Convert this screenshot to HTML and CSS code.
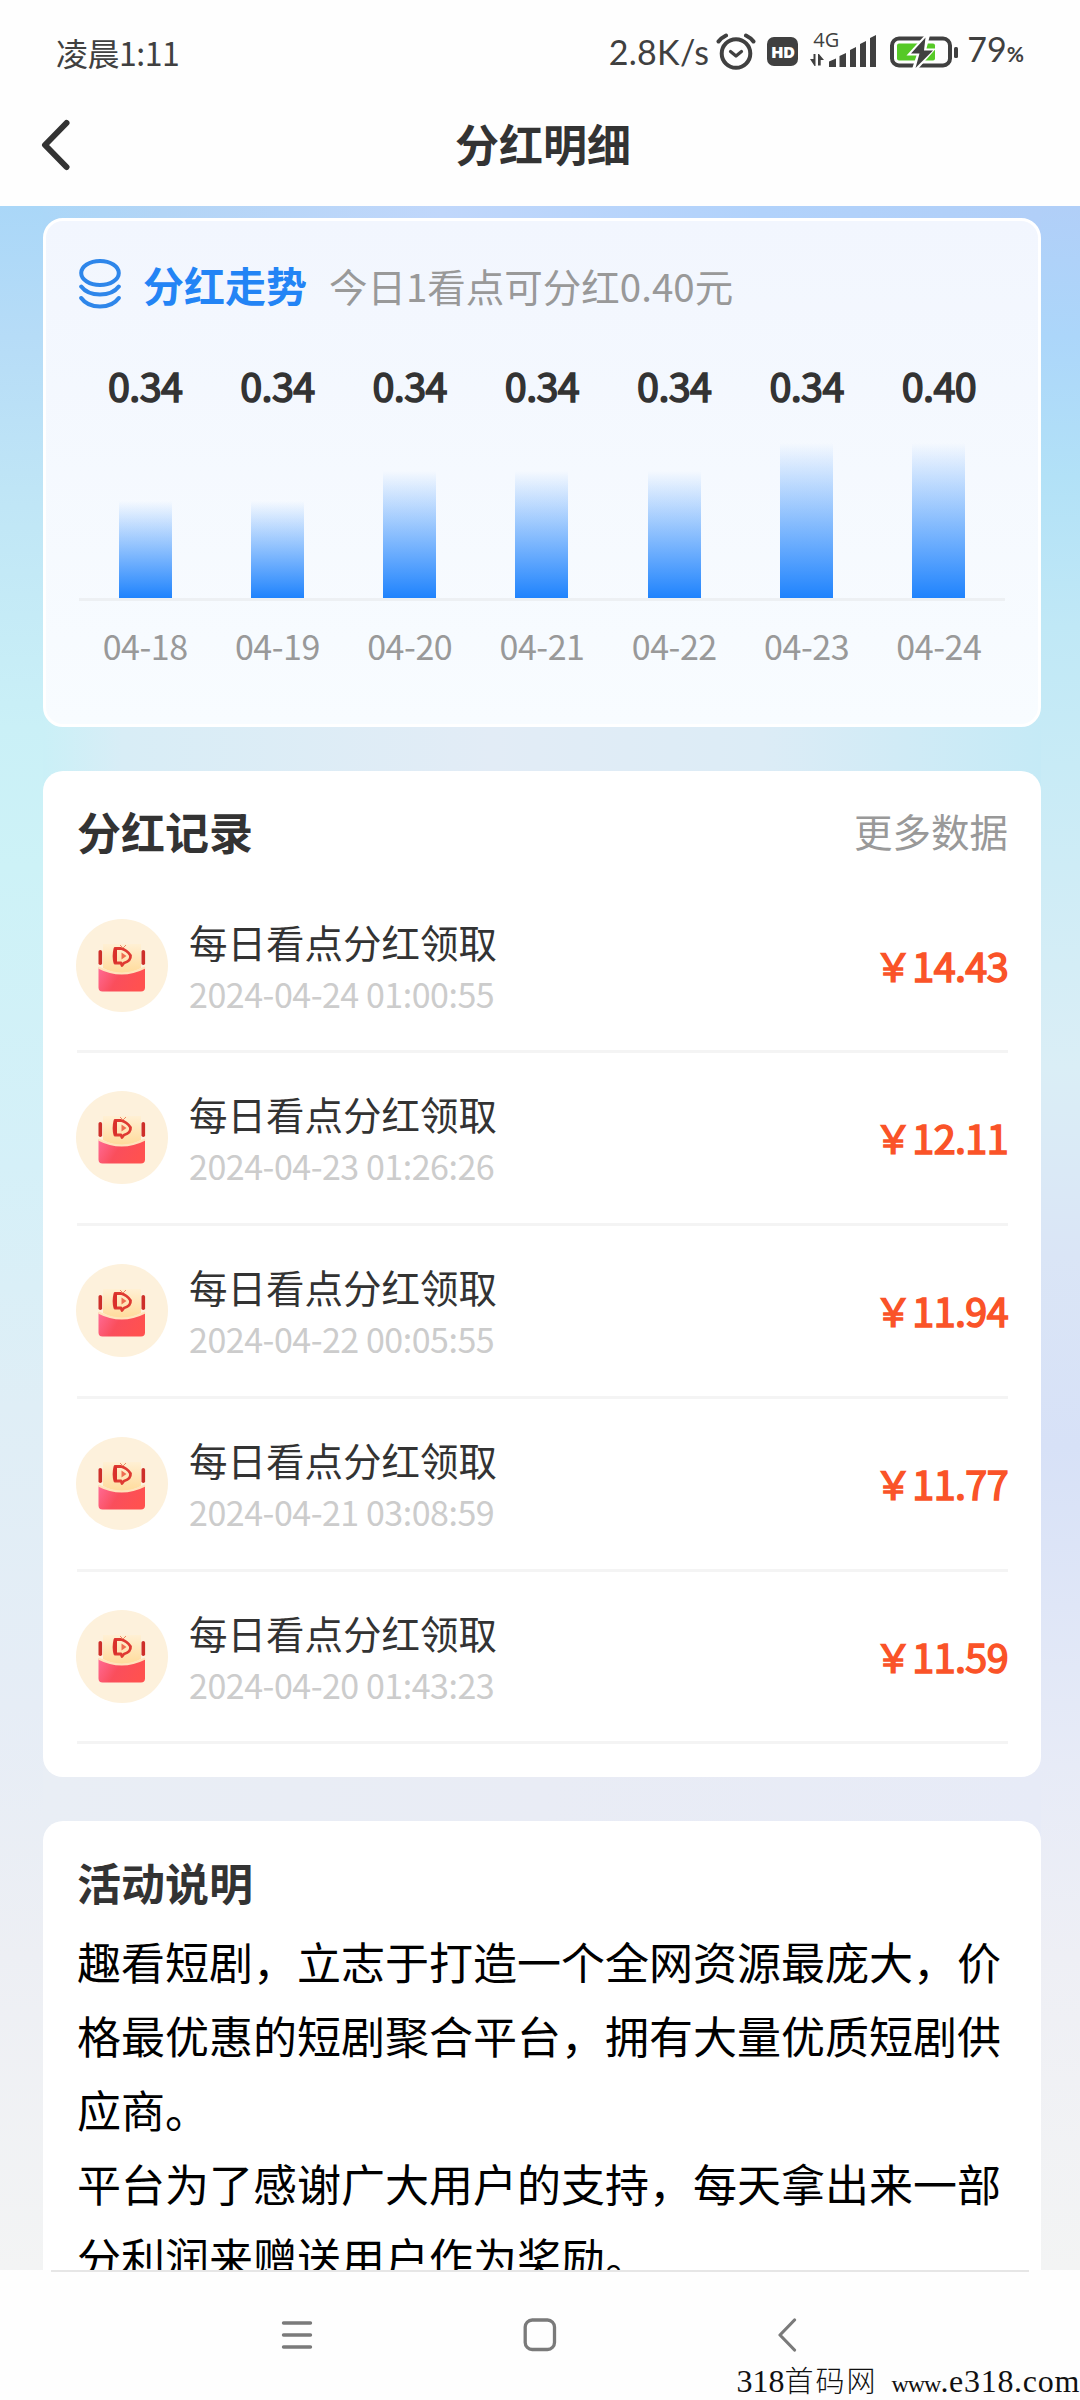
FILE: index.html
```
<!DOCTYPE html>
<html lang="zh-CN">
<head>
<meta charset="utf-8">
<title>分红明细</title>
<link rel="stylesheet" href="styles.css">
</head>
<body>
<svg class="defs" width="0" height="0" aria-hidden="true">
  <defs>
    <linearGradient id="pocket" x1="0" y1="0" x2="1" y2="0.3"><stop offset="0" stop-color="#ff6b96"/><stop offset="0.5" stop-color="#fa4e5c"/><stop offset="1" stop-color="#ff5150"/></linearGradient>
    <linearGradient id="paper" x1="0" y1="0" x2="0" y2="1"><stop offset="0" stop-color="#fff0d4"/><stop offset="1" stop-color="#ffdb9b"/></linearGradient>
    <symbol id="envelope" viewBox="0 0 92 93">
      <ellipse cx="46" cy="46.5" rx="46" ry="46.5" fill="#fdf1dc"/>
      <rect x="22.500" y="31" width="3.600" height="15" rx="1.800" fill="#cd2f2a"/>
      <rect x="65.500" y="31" width="3.600" height="15" rx="1.800" fill="#cd2f2a"/>
      <path d="M27 25h38v24q-19 10-38 0z" fill="url(#paper)"/>
      <path d="M22.500 48.500q23 12 46.500 0v20q0 4-4 4H26.500q-4 0-4-4z" fill="url(#pocket)"/>
      <path d="M22.500 48.500q23 12 46.500 0" fill="none" stroke="#ffe3bb" stroke-width="2"/>
      <path d="M41 29.500h-2q-2 8 0 14.500h6l1 2.500 2-2.500q7-2 6.500-7.500-3.500-5.500-9.500-7z" fill="none" stroke="#df3a32" stroke-width="2.800" stroke-linejoin="round"/>
      <path d="M38 29.500h3v14.500h-3q-1.500-7 0-14.500z" fill="#d9302b"/>
      <path d="M45.500 33.500v7l5-3.500z" fill="#ef6c50"/>
      <path d="M44 26l3 3 3-3" fill="none" stroke="#ef8a68" stroke-width="1"/>
    </symbol>
  </defs>
</svg>

<header class="status-bar">
  <span class="clock">凌晨1:11</span>
  <span class="speed">2.8K/s</span>
  <svg class="alarm" width="40" height="40" viewBox="0 0 40 40" fill="none" stroke="#404040" stroke-linecap="round">
    <circle cx="20" cy="21.500" r="14.300" stroke-width="4"/><path d="M14.500 19.500l5.500 4.500 5.500-4.500" stroke-width="3.200" stroke-linejoin="round"/><path d="M2.500 9.500Q5 6 10 3.500M37.500 9.500Q35 6 30 3.500" stroke-width="4"/>
  </svg>
  <span class="hd">HD</span>
  <span class="network">
    <span class="gen">4G</span>
    <svg width="66" height="34" viewBox="0 0 66 34" fill="#404040">
      <path d="M0 24h3.500v-5h2v12H4.500zM8 19h1l5 6h-3.300v5.500H8z"/>
      <path d="M19 26.500l7-3v8.500h-7zM29.500 21l6.500-3v14h-6.500zM40 15l6-3v20h-6zM50 9l6-3v26h-6zM60 3l6-3v32h-6z"/>
    </svg>
  </span>
  <svg class="battery" width="68" height="34" viewBox="0 0 68 34">
    <rect x="2" y="3.500" width="58" height="27" rx="7" fill="none" stroke="#404040" stroke-width="4"/>
    <rect x="7" y="8.500" width="38" height="17" rx="2" fill="#56c926"/>
    <rect x="64" y="12" width="4" height="11" rx="1.500" fill="#404040"/>
    <path d="M35 0L16.500 20.500h10L22 34h6L46 13.500H36.500L40 0z" fill="#fff"/>
    <path d="M35.500 2.500L21 18.500h8.500L25.500 33 43 15.500h-9z" fill="#404040"/>
  </svg>
  <span class="percent">79<small>%</small></span>
</header>

<nav class="title-bar">
  <svg class="back" width="30" height="54" viewBox="0 0 30 54" fill="none" stroke="#333" stroke-width="6" stroke-linecap="round" stroke-linejoin="round"><path d="M25.500 5L4 27l21.500 22"/></svg>
  <h1>分红明细</h1>
</nav>

<main class="page">
  <section class="card trend">
    <div class="trend-head">
      <svg width="42" height="50" viewBox="0 0 42 50" fill="none" stroke="#2e86ea" stroke-width="4" stroke-linecap="round"><ellipse cx="21" cy="14" rx="18.800" ry="12"/><path d="M2.200 27.500q6 8 18.800 8t18.800-8M2.200 39q6 8.500 18.800 8.500t18.800-8.500"/></svg>
      <h2>分红走势</h2>
      <p>今日1看点可分红0.40元</p>
    </div>
    <div class="chart">
      <div class="values"><span>0.34</span><span>0.34</span><span>0.34</span><span>0.34</span><span>0.34</span><span>0.34</span><span>0.40</span></div>
      <div class="bars">
        <i style="height:97px"></i><i style="height:97px"></i><i style="height:127px"></i><i style="height:127px"></i><i style="height:127px"></i><i style="height:155px"></i><i style="height:155px"></i>
      </div>
      <div class="dates"><span>04-18</span><span>04-19</span><span>04-20</span><span>04-21</span><span>04-22</span><span>04-23</span><span>04-24</span></div>
    </div>
  </section>

  <section class="card records">
    <div class="records-head"><h2>分红记录</h2><a>更多数据</a></div>
    <ul>
      <li><svg class="avatar"><use href="#envelope"/></svg><div class="entry"><b>每日看点分红领取</b><time>2024-04-24 01:00:55</time></div><span class="amount"><i>￥</i>14.43</span></li>
      <li><svg class="avatar"><use href="#envelope"/></svg><div class="entry"><b>每日看点分红领取</b><time>2024-04-23 01:26:26</time></div><span class="amount"><i>￥</i>12.11</span></li>
      <li><svg class="avatar"><use href="#envelope"/></svg><div class="entry"><b>每日看点分红领取</b><time>2024-04-22 00:05:55</time></div><span class="amount"><i>￥</i>11.94</span></li>
      <li><svg class="avatar"><use href="#envelope"/></svg><div class="entry"><b>每日看点分红领取</b><time>2024-04-21 03:08:59</time></div><span class="amount"><i>￥</i>11.77</span></li>
      <li><svg class="avatar"><use href="#envelope"/></svg><div class="entry"><b>每日看点分红领取</b><time>2024-04-20 01:43:23</time></div><span class="amount"><i>￥</i>11.59</span></li>
    </ul>
  </section>

  <section class="card about">
    <h2>活动说明</h2>
    <p>趣看短剧，立志于打造一个全网资源最庞大，价格最优惠的短剧聚合平台，拥有大量优质短剧供应商。</p>
    <p>平台为了感谢广大用户的支持，每天拿出来一部分利润来赠送用户作为奖励。</p>
  </section>
</main>

<footer class="system-nav">
  <svg class="menu" width="32" height="30" viewBox="0 0 32 30" stroke="#7a7a7a" stroke-width="3.400" stroke-linecap="round"><path d="M2.500 3h27M2.500 15h27M2.500 27h27"/></svg>
  <svg class="home" width="34" height="34" viewBox="0 0 34 34" fill="none" stroke="#7a7a7a" stroke-width="3.300"><rect x="2.200" y="2" width="29.300" height="29.500" rx="7"/></svg>
  <svg class="prev" width="20" height="34" viewBox="0 0 20 34" fill="none" stroke="#7a7a7a" stroke-width="3.200" stroke-linecap="round" stroke-linejoin="round"><path d="M17.500 2L3 17l14.500 15"/></svg>
  <span class="watermark">318<b>首码网</b> <span class="url"><span class="www">www</span>.e318.com</span></span>
</footer>
</body>
</html>
```
FILE: styles.css
```
* { box-sizing: border-box; margin: 0; padding: 0; }
body {
  width: 1080px; height: 2400px; overflow: hidden;
  display: flex; flex-direction: column;
  background: #fefefe; color: #333;
  font-family: "Noto Sans CJK SC", "Noto Sans", sans-serif;
}
svg { display: block; flex: none; }
.defs { position: absolute; }
h1, h2 { font-weight: 700; font-size: 44px; line-height: 60px; }

.status-bar { height: 106px; padding: 0 56px 3px 56px; display: flex; align-items: center; color: #404040; font-size: 32px; line-height: 40px; }
.clock { margin-right: auto; letter-spacing: -0.5px; }
.speed { font-family: Lato, sans-serif; font-size: 34px; letter-spacing: 0.3px; margin-right: 7px; }
.alarm { margin-right: 11px; }
.hd { width: 31px; height: 29px; border-radius: 7px; background: #404040; color: #fff; font: 800 16.500px/29px "Open Sans", sans-serif; letter-spacing: -0.5px; text-align: center; margin-right: 12px; }
.network { position: relative; margin-right: 14px; }
.gen { position: absolute; left: 3px; top: -8px; font: 20px/26px "Open Sans", sans-serif; }
.battery { margin-right: 9px; }
.percent { font-family: Lato, sans-serif; font-size: 34px; }
.percent small { font-size: 21px; font-weight: 700; }

.title-bar { position: relative; height: 100px; display: flex; justify-content: center; padding-top: 7px; }
.title-bar h1 { padding-left: 6px; }
.back { position: absolute; left: 41px; top: 12px; }

.page {
  height: 2064px; overflow: hidden; flex: none;
  padding: 12px 39px 0 43px;
  display: flex; flex-direction: column; gap: 44px;
  background:
    linear-gradient(90deg, #abd7f8 0, #b3d5f6 12%, #c0d7fb 40%, #b1d2fb 72%, #b1cff8 100%) 43px 0 / 998px 34px no-repeat,
    linear-gradient(90deg, #caf0f7 0, #d8edf6 8%, #e2ecf6 45%, #dcecf6 72%, #c5eaf6 100%) 43px 500px / 998px 86px no-repeat,
    linear-gradient(90deg, #e9eef5 0, #e9ecf5 50%, #e7ebf7 100%) 43px 1540px / 998px 96px no-repeat,
    linear-gradient(180deg, #b1cff8 0, #acd6fa 130px, #b2e1f7 270px, #c0e8f6 420px, #c8ebf6 560px, #daeef6 860px, #dae5f6 1050px, #d7e1f7 1240px, #e7ebf7 1560px, #eeeff5 1750px, #f3f4f4 2064px) 100% 0 / 39px 100% no-repeat,
    linear-gradient(180deg, #aad7f8 0, #b6dcf7 130px, #c0e6f6 300px, #caf0f7 520px, #cdf2f7 660px, #d5f0f8 960px, #dfeef6 1200px, #e6edf6 1500px, #edeff4 1750px, #f3f4f4 2064px);
}
.card { flex: none; border-radius: 20px; background: #fff; padding: 0 33px 0 34px; }

.trend { height: 509px; border: 3px solid #fff; background: linear-gradient(180deg, #f2f6fe, #f8fcff); padding: 28px 33px 0 33px; }
.trend-head { display: flex; align-items: center; height: 70px; }
.trend-head svg { margin-top: -1px; }
.trend-head h2 { font-size: 41px; color: #2384f5; margin-left: 22px; }
.trend-head p { font-size: 38.500px; color: #999; margin-left: 22px; padding-top: 1px; }
.chart > div { display: grid; grid-template-columns: repeat(7, 1fr); justify-items: center; text-align: center; }
.values { font-size: 39.500px; letter-spacing: -0.600px; -webkit-text-stroke: 1.600px #333; line-height: 60px; padding-top: 36px; }
.bars { height: 186px; align-items: end; border-bottom: 3px solid #edf0f3; }
.bars i { width: 53px; background: linear-gradient(0deg, #1f83fd, rgba(31,131,253,0)); }
.dates { color: #999; font-size: 34px; letter-spacing: -0.450px; line-height: 50px; padding-top: 20px; }

.records { height: 1006px; }
.records-head { height: 109.500px; padding-top: 30px; display: flex; justify-content: space-between; }
.records-head a { font-size: 38.500px; line-height: 58px; color: #999; }
.records ul { list-style: none; }
.records li { height: 172.800px; border-bottom: 3px solid #f4f4f4; display: flex; }
.avatar { width: 92px; height: 93px; margin: 38px 21px 0 -1px; }
.entry { display: flex; flex-direction: column; padding-top: 34px; }
.entry b { font-weight: 400; font-size: 38.500px; line-height: 53px; }
.entry time { font-size: 34px; letter-spacing: -0.480px; line-height: 52px; color: #ccc; }
.amount { margin-left: auto; padding-top: 55px; display: flex; font-size: 39.500px; letter-spacing: -0.600px; line-height: 58px; color: #fa5328; -webkit-text-stroke: 1.600px #fa5328; }
.amount i { font-style: normal; font-size: 38px; letter-spacing: 0; }

.about { height: 600px; padding: 31px 33px 0 34px; color: #000; }
.about h2 { color: #333; margin-bottom: 12px; }
.about p { font-size: 44px; line-height: 74px; }

.system-nav { position: relative; flex: none; height: 130px; display: flex; align-items: center; padding-left: 281px; }
.system-nav::before { content: ""; position: absolute; left: 51px; right: 51px; top: 0; height: 2px; background: #e6e6e6; }
.home { margin-left: 210px; }
.prev { margin-left: 220px; }
.watermark { position: absolute; right: 0; bottom: -1px; display: flex; align-items: baseline; font: 32px/34px "Liberation Serif", "Noto Sans CJK SC", serif; color: #111; white-space: pre; }
.watermark b { font-weight: 300; font-size: 29px; letter-spacing: 2px; }
.url { margin-left: 14px; letter-spacing: 0.700px; }
.www { font-size: 24px; letter-spacing: -1px; }
```
